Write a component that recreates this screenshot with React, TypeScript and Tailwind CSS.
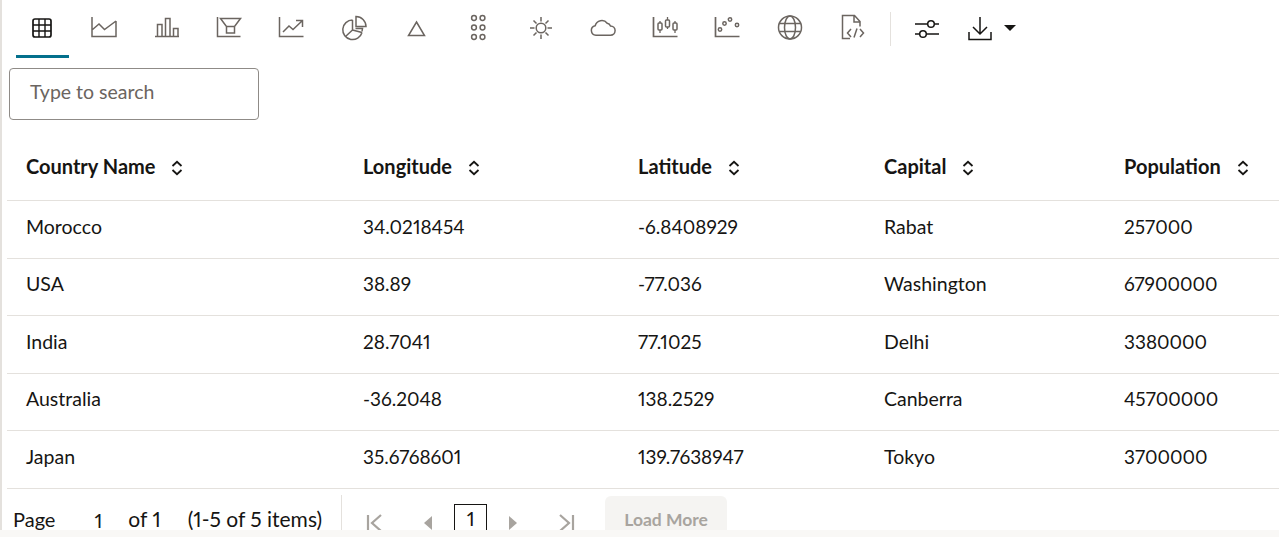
import type { ReactNode } from 'react';

const rows = [
    ['Morocco', '34.0218454', '-6.8408929', 'Rabat', '257000'],
    ['USA', '38.89', '-77.036', 'Washington', '67900000'],
    ['India', '28.7041', '77.1025', 'Delhi', '3380000'],
    ['Australia', '-36.2048', '138.2529', 'Canberra', '45700000'],
    ['Japan', '35.6768601', '139.7638947', 'Tokyo', '3700000'],
];

const headers = ['Country Name', 'Longitude', 'Latitude', 'Capital', 'Population'];
const cols = 'grid grid-cols-[337px_275px_246px_240px_1fr]';

function Icon({ children, className = 'text-[#6b6560]' }: { children: ReactNode; className?: string }) {
    return (
        <svg className={`h-7 w-7 ${className}`} viewBox="0 0 28 28" fill="none" stroke="currentColor" strokeWidth={1.5}>
            {children}
        </svg>
    );
}

const chartIcons: ReactNode[] = [
    <>
        <rect x="5" y="5" width="18" height="18" rx="2" strokeWidth={1.7} />
        <path d="M5 11h18M5 17h18M11 5v18M17 5v18" strokeWidth={1.4} />
    </>,
    <path d="M2 3v19.500h24V7M2 16l7-6 5.500 5.500L26 7" />,
    <path d="M2 22.500h24M4.500 22.500V10.500h4.500v12M12.500 22.500V4.500h4.500v18M20.500 22.500V14.500h4.500v8" />,
    <path d="M2.500 3v19.500h23M5.500 4.500h20l-6 8v6.500h-8v-6.500zM11.500 12.500h8" />,
    <path d="M2.500 3v19.500h24M6 18l6-6 4 3.500 9-8.500M19 6.500h6.500V13" />,
    <>
        <path d="M12.500 6a9.800 9.800 0 1 0 9.500 12.500M12.500 6v10l-7 6.500M12.500 16l9.500 2.500" />
        <path d="M16 2.500a10 10 0 0 1 10 10H16zM15.500 14.500h7l-.500 3" />
    </>,
    <path d="M14.500 8l8 13.500h-16z" />,
    <>
        {[4, 13.500, 23].map((cy) => (
            <g key={cy}>
                <circle cx="10" cy={cy} r="2.400" />
                <circle cx="18.500" cy={cy} r="2.400" />
            </g>
        ))}
    </>,
    <>
        <circle cx="14" cy="14" r="4.800" />
        <path d="M14 3v4.500M14 20.500V25M3 14h4.500M20.500 14H25M6.500 6.500l3 3M18.500 18.500l3 3M21.500 6.500l-3 3M9.500 18.500l-3 3" />
    </>,
    <path d="M7 21.200a4.800 4.800 0 0 1-.8-9.500 6.800 6.800 0 0 1 12-2.500 4.500 4.500 0 0 1 3.300 2.800 4.600 4.600 0 0 1 0 9.200z" />,
    <>
        <path d="M2.500 3v19.500h24" strokeWidth={1.7} />
        <path d="M9 7v12M16.500 3v12M24 7v12" strokeWidth={1.3} />
        <rect x="7" y="9" width="4" height="7" rx="1" fill="white" />
        <rect x="14.500" y="6" width="4" height="7" rx="1" fill="white" />
        <rect x="22" y="9" width="4" height="7" rx="1" fill="white" />
    </>,
    <>
        <path d="M2.500 3v19.500h24" strokeWidth={1.7} />
        <circle cx="7" cy="15.500" r="1.700" />
        <circle cx="11.500" cy="9.500" r="1.700" />
        <circle cx="17" cy="5.500" r="1.700" />
        <circle cx="24" cy="11" r="1.700" />
    </>,
    <>
        <circle cx="14" cy="13.500" r="11.500" />
        <ellipse cx="14" cy="13.500" rx="5.500" ry="11.500" />
        <path d="M3.500 9.500h21M3.500 17.500h21" />
    </>,
    <>
        <path d="M12 24.500H4.500V1.500h12l5.500 6v5M16 1.500V8h6" />
        <path d="M13 15l-3.500 4 3.500 4M22 15l3.500 4-3.500 4M19 14.500l-3 9" />
    </>,
];

function SortIcon() {
    return (
        <svg className="ml-[15px] mt-1 h-4 w-3.5 text-[#161513]" viewBox="0 0 14 16" fill="none" stroke="currentColor" strokeWidth={1.8}>
            <path d="M2.500 6L7 1.800 11.500 6M2.500 10L7 14.200 11.500 10" />
        </svg>
    );
}

export default function App() {
    return (
        <div className="h-[537px] w-[1279px] overflow-hidden bg-white font-['Lato',sans-serif] text-[#161513] proportional-nums">
            <div className="relative h-[530px] overflow-hidden border-l-2 border-[#e4e1dd] pl-[5px]">
                {/* Toolbar */}
                <div className="flex h-[58px] items-start">
                    <div className="ml-[4px] flex">
                        {chartIcons.map((icon, i) => (
                            <div key={i} className="relative flex h-[58px] w-[62.3px] justify-center pt-[14px]">
                                <Icon className={i === 0 ? 'text-[#161513]' : 'text-[#6b6560]'}>{icon}</Icon>
                                {i === 0 && <div className="absolute bottom-0 left-[5px] h-[3px] w-[53px] bg-[#04708c]" />}
                            </div>
                        ))}
                    </div>
                    <div className="ml-[7px] mt-3 h-[34px] w-px bg-[#e4e1dd]" />
                    <div className="ml-[22px] mt-[14px] flex items-center text-[#161513]">
                        <svg className="h-7 w-7" viewBox="0 0 28 28" fill="none" stroke="currentColor" strokeWidth={1.5}>
                            <path d="M2 10h12.500M21.500 10H26M2 20h4.500M13.500 20H26" />
                            <circle cx="18" cy="10" r="3.300" />
                            <circle cx="10" cy="20" r="3.300" />
                        </svg>
                        <svg className="ml-[25px] h-7 w-7" viewBox="0 0 28 28" fill="none" stroke="currentColor" strokeWidth={1.5}>
                            <path d="M14 3v16M7 13l7 7 7-7M3 18v7.500h22V18" />
                        </svg>
                        <div className="ml-[10px] h-0 w-0 border-x-[6px] border-t-[6px] border-x-transparent border-t-[#161513]" />
                    </div>
                </div>

                {/* Search */}
                <div className="ml-[2px] mt-[10px] flex h-[52px] w-[250px] items-center rounded border border-[#8f8b87] pb-[5px] pl-5 text-[19.5px] text-[#6b6560]">
                    Type to search
                </div>

                {/* Table */}
                <div className="mt-[17px]">
                    <div className={`${cols} h-[64px] items-center border-b border-[#e4e1dd] pb-[6px] pl-[19px] text-[20px] font-bold`}>
                        {headers.map((h) => (
                            <div key={h} className="flex items-center">
                                {h}
                                <SortIcon />
                            </div>
                        ))}
                    </div>
                    {rows.map((row) => (
                        <div key={row[0]} className={`${cols} h-[57.5px] items-center border-b border-[#e4e1dd] pb-[5px] pl-[19px] text-[19.5px] leading-6`}>
                            {row.map((cell, i) => (
                                <div key={i} className={i === 0 || i === 3 ? '' : 'text-[19px]'}>
                                    {cell}
                                </div>
                            ))}
                        </div>
                    ))}
                </div>

                {/* Pagination */}
                <div className="mt-[6px] flex h-[50px] items-start text-[20px] leading-5">
                    <div className="ml-[6px] mt-[13px] flex items-center">
                        <span>Page</span>
                        <span className="ml-[39px] mt-[2px]">1</span>
                        <span className="ml-[26px] text-[21px]">of 1</span>
                        <span className="ml-[27px] text-[21px]">(1-5 of 5 items)</span>
                    </div>
                    <div className="ml-[19px] h-[40px] w-px bg-[#e4e1dd]" />
                    <svg className="ml-[24px] mt-[19px] h-[18px] w-[18px] text-[#a8a49f]" viewBox="0 0 18 18" fill="none" stroke="currentColor" strokeWidth={2.2}>
                        <path d="M2 1v16M15 1L6 9l9 8" />
                    </svg>
                    <div className="ml-[40px] mt-[21px] h-0 w-0 border-y-[7px] border-r-[8px] border-y-transparent border-r-[#a8a49f]" />
                    <div className="ml-[22px] mt-[9px] h-[30px] w-[33px] border border-[#161513] text-center leading-[26px]">1</div>
                    <div className="ml-[22px] mt-[21px] h-0 w-0 border-y-[7px] border-l-[8px] border-y-transparent border-l-[#a8a49f]" />
                    <svg className="ml-[40px] mt-[19px] h-[18px] w-[18px] text-[#a8a49f]" viewBox="0 0 18 18" fill="none" stroke="currentColor" strokeWidth={2.2}>
                        <path d="M16 1v16M3 1l9 8-9 8" />
                    </svg>
                    <div className="ml-[30px] mt-px h-[47px] w-[122px] rounded-md bg-[#f5f4f2] pt-[14px] text-center text-[17.5px] font-bold text-[#a8a49f]">
                        Load More
                    </div>
                </div>
            </div>
            <div className="h-[7px] bg-[#f9f8f6]" />
        </div>
    );
}
